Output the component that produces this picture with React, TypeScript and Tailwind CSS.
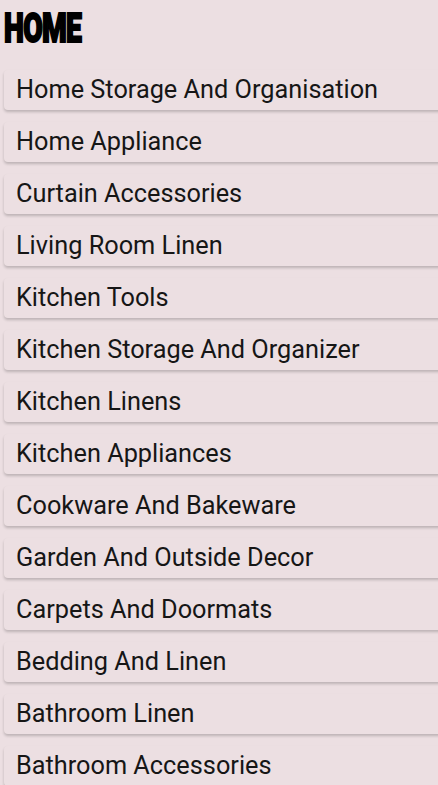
const ITEMS = [
  'Home Storage And Organisation',
  'Home Appliance',
  'Curtain Accessories',
  'Living Room Linen',
  'Kitchen Tools',
  'Kitchen Storage And Organizer',
  'Kitchen Linens',
  'Kitchen Appliances',
  'Cookware And Bakeware',
  'Garden And Outside Decor',
  'Carpets And Doormats',
  'Bedding And Linen',
  'Bathroom Linen',
  'Bathroom Accessories',
]

export default function App() {
  return (
    <div className="min-h-screen bg-[#ecdfe2] overflow-hidden font-['Roboto',sans-serif] pl-1">
      <h1 className="pt-[6px] h-[70px] text-[41px] leading-[44px] font-black text-black origin-left scale-x-[0.69] tracking-tight [-webkit-text-stroke:2px_black]">
        HOME
      </h1>
      <ul className="flex flex-col gap-3 -mr-4">
        {ITEMS.map((item) => (
          <li
            key={item}
            className="h-10 flex items-center pl-3 rounded bg-[#ecdfe2] shadow-[0_2px_3px_rgba(0,0,0,0.2)] text-[25.3px] text-[#161616]"
          >
            {item}
          </li>
        ))}
      </ul>
    </div>
  )
}
